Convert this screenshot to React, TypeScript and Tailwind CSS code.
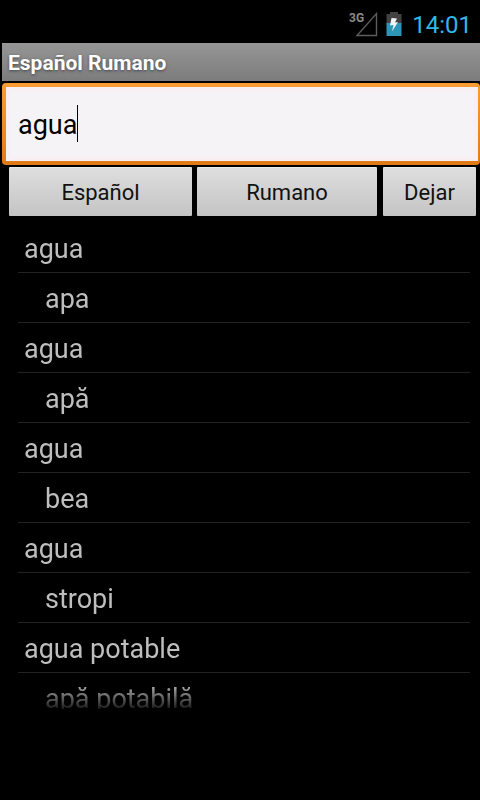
import React, { useState } from 'react';

interface Entry {
  word: string;
  translation: string;
}

const ENTRIES: Entry[] = [
  { word: 'agua', translation: 'apa' },
  { word: 'agua', translation: 'apă' },
  { word: 'agua', translation: 'bea' },
  { word: 'agua', translation: 'stropi' },
  { word: 'agua potable', translation: 'apă potabilă' },
];

const BUTTON_CLASS =
  'h-[49px] rounded-[1px] border-t border-[#ececec] bg-linear-to-b from-[#dedede] to-[#c4c4c4] text-[22px] text-[#111111]';

const SignalIcon: React.FC = () => (
  <svg width="30" height="26" viewBox="0 0 30 26" aria-label="3G">
    <text x="0" y="11" fontSize="12" fontWeight="700" fill="#8a8a8a" fontFamily="Roboto, sans-serif">
      3G
    </text>
    <path d="M27.5 2.5V24.5H8Z" fill="none" stroke="#5c5c5c" strokeWidth="1.4" />
  </svg>
);

const BatteryIcon: React.FC = () => (
  <svg width="16" height="24" viewBox="0 0 16 24" aria-label="Battery">
    <path d="M4 0H12V2H15.500V12H0.500V2H4Z" fill="#424242" />
    <path d="M0.500 11H15.500V24H0.500Z" fill="#2d96b8" />
    <path d="M5.500 6L11 6.500L9 10.500L12 10L6 19.500L7.500 13L4 13.500Z" fill="#f4f4f4" />
  </svg>
);

const StatusBar: React.FC = () => (
  <div className="flex h-[43px] items-center justify-end pt-1 pr-2">
    <SignalIcon />
    <div className="ml-[7px]">
      <BatteryIcon />
    </div>
    <span className="ml-[10px] pt-[2px] text-[24px] leading-none text-[#33b5e5]">14:01</span>
  </div>
);

const ResultList: React.FC<{ entries: Entry[] }> = ({ entries }) => (
  <ul className="mt-[7px] h-[486px] overflow-hidden pr-[10px] pl-[18px] text-[27px] text-[#bebebe] mask-[linear-gradient(to_bottom,black_460px,transparent_490px)]">
    {entries.map((entry, i) => (
      <React.Fragment key={i}>
        <li className="h-[50px] border-b border-[#222222] pl-[6px] leading-[52px]">{entry.word}</li>
        <li className="h-[50px] border-b border-[#222222] pl-[27px] leading-[52px]">{entry.translation}</li>
      </React.Fragment>
    ))}
  </ul>
);

export default function App() {
  const [query, setQuery] = useState('agua');

  return (
    <div className="min-h-screen overflow-hidden bg-black font-[Roboto,sans-serif]">
      <StatusBar />

      <h1 className="ml-[2px] h-[38px] bg-linear-to-b from-[#969696] to-[#7c7c7c] pl-[6px] text-[21px] font-bold leading-[40px] text-white [text-shadow:0_1px_3px_#444444]">
        Español Rumano
      </h1>

      <div className="relative mt-[2px] ml-[2px] rounded-[4px] bg-linear-to-b from-[#fb9d32] to-[#e07a15] py-1 pr-[2px] pl-1">
        <input
          type="text"
          aria-label="Palabra"
          value={query}
          onChange={(e) => setQuery(e.target.value)}
          className="block h-[74px] w-full border-4 border-[#f8eff2] bg-[#f6f3f7] pt-[2px] pl-2 text-[27px] text-black caret-transparent outline-none"
        />
        <span className="pointer-events-none absolute top-[22px] left-[75px] h-[37px] w-px bg-black" />
      </div>

      <div className="mt-[2px] flex pr-1 pl-[9px]">
        <button type="button" className={`${BUTTON_CLASS} mr-[5px] flex-[183]`}>
          Español
        </button>
        <button type="button" className={`${BUTTON_CLASS} mr-[6px] flex-[180]`}>
          Rumano
        </button>
        <button type="button" className={`${BUTTON_CLASS} w-[93px]`}>
          Dejar
        </button>
      </div>

      <ResultList entries={ENTRIES} />
    </div>
  );
}
